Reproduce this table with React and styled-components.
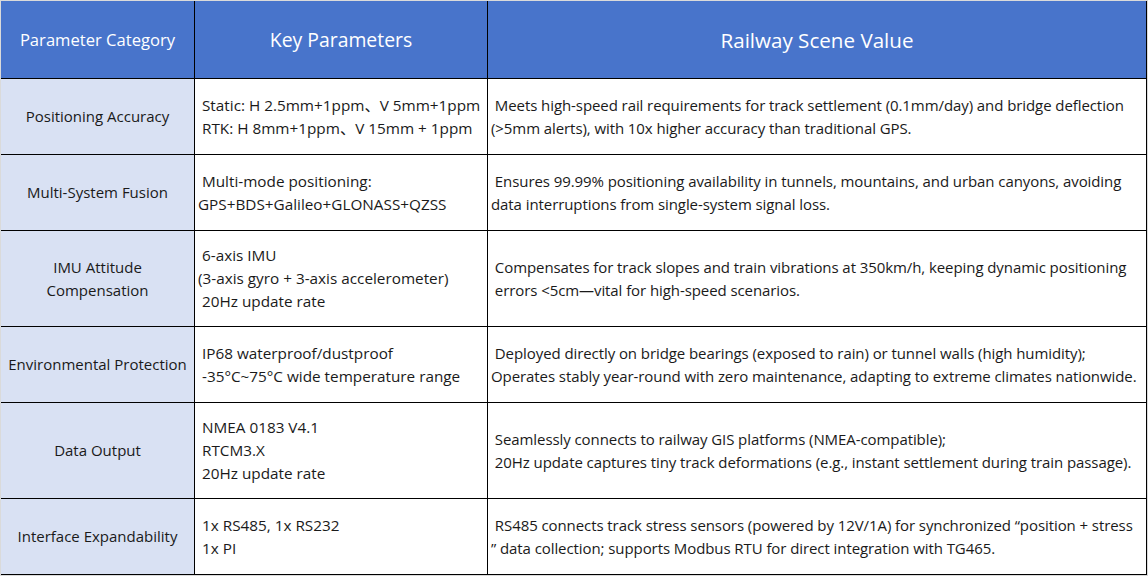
import React from 'react';
import styled, { createGlobalStyle } from 'styled-components';

const GlobalStyle = createGlobalStyle`
  html, body {
    margin: 0;
    padding: 0;
    background: #dadada;
  }
  body {
    font-family: 'Open Sans', 'Noto Sans', 'Noto Sans CJK SC', sans-serif;
    color: #1a1a1a;
  }
`;

const Page = styled.div`
  padding: 1px 0 0 1px;
  width: 1148px;
  height: 576px;
  box-sizing: border-box;
  overflow: hidden;
`;

const Grid = styled.div`
  display: grid;
  grid-template-columns: 194px 293px 659px;
  grid-template-rows: 78px 76px 76px 96px 76px 96px 76px;
`;

const Cell = styled.div`
  box-sizing: border-box;
  border-right: 1px solid #000;
  border-bottom: 1px solid #000;
  display: flex;
  flex-direction: column;
  justify-content: center;
  background: ${({ $kind }) =>
    $kind === 'head' ? '#4874cb' : $kind === 'cat' ? '#d9e1f3' : '#ffffff'};
  color: ${({ $kind }) => ($kind === 'head' ? '#ffffff' : '#1a1a1a')};
  align-items: ${({ $center }) => ($center ? 'center' : 'flex-start')};
  text-align: ${({ $center }) => ($center ? 'center' : 'left')};
  padding: ${({ $center }) => ($center ? '0 4px' : '0 0 0 3px')};
`;

const HeadText = styled.span`
  font-size: ${({ $size }) => $size}px;
  white-space: nowrap;
`;

const CatText = styled.span`
  font-size: 15px;
  line-height: 23px;
`;

const Line = styled.div`
  font-size: ${({ $narrow }) => ($narrow ? '15px' : '15.3px')};
  letter-spacing: ${({ $narrow }) => ($narrow ? '-0.08px' : '0')};
  line-height: 23px;
  white-space: pre;
`;

const rows = [
  {
    cat: ['Positioning Accuracy'],
    keys: [' Static: H 2.5mm+1ppm、V 5mm+1ppm', ' RTK: H 8mm+1ppm、V 15mm + 1ppm'],
    value: [
      ' Meets high-speed rail requirements for track settlement (0.1mm/day) and bridge deflection',
      '(>5mm alerts), with 10x higher accuracy than traditional GPS.',
    ],
  },
  {
    cat: ['Multi-System Fusion'],
    keys: [' Multi-mode positioning:', 'GPS+BDS+Galileo+GLONASS+QZSS'],
    value: [
      ' Ensures 99.99% positioning availability in tunnels, mountains, and urban canyons, avoiding',
      'data interruptions from single-system signal loss.',
    ],
  },
  {
    cat: ['IMU Attitude', 'Compensation'],
    keys: [' 6-axis IMU', '(3-axis gyro + 3-axis accelerometer)', ' 20Hz update rate'],
    value: [
      ' Compensates for track slopes and train vibrations at 350km/h, keeping dynamic positioning',
      ' errors <5cm—vital for high-speed scenarios.',
    ],
  },
  {
    cat: ['Environmental Protection'],
    keys: [' IP68 waterproof/dustproof', ' -35°C~75°C wide temperature range'],
    value: [
      ' Deployed directly on bridge bearings (exposed to rain) or tunnel walls (high humidity);',
      'Operates stably year-round with zero maintenance, adapting to extreme climates nationwide.',
    ],
  },
  {
    cat: ['Data Output'],
    keys: [' NMEA 0183 V4.1', ' RTCM3.X', ' 20Hz update rate'],
    value: [
      ' Seamlessly connects to railway GIS platforms (NMEA-compatible);',
      ' 20Hz update captures tiny track deformations (e.g., instant settlement during train passage).',
    ],
  },
  {
    cat: ['Interface Expandability'],
    keys: [' 1x RS485, 1x RS232', ' 1x PI'],
    value: [
      ' RS485 connects track stress sensors (powered by 12V/1A) for synchronized “position + stress',
      '” data collection; supports Modbus RTU for direct integration with TG465.',
    ],
  },
];

export default function App() {
  return (
    <Page>
      <GlobalStyle />
      <Grid>
        <Cell $kind="head" $center>
          <HeadText $size={16.6}>Parameter Category</HeadText>
        </Cell>
        <Cell $kind="head" $center>
          <HeadText $size={19.4}>Key Parameters</HeadText>
        </Cell>
        <Cell $kind="head" $center>
          <HeadText $size={20.6}>Railway Scene Value</HeadText>
        </Cell>
        {rows.map((r, i) => (
          <React.Fragment key={i}>
            <Cell $kind="cat" $center>
              {r.cat.map((c) => (
                <CatText key={c}>{c}</CatText>
              ))}
            </Cell>
            <Cell>
              {r.keys.map((k, j) => (
                <Line key={j}>{k}</Line>
              ))}
            </Cell>
            <Cell>
              {r.value.map((v, j) => (
                <Line key={j} $narrow>
                  {v}
                </Line>
              ))}
            </Cell>
          </React.Fragment>
        ))}
      </Grid>
    </Page>
  );
}
